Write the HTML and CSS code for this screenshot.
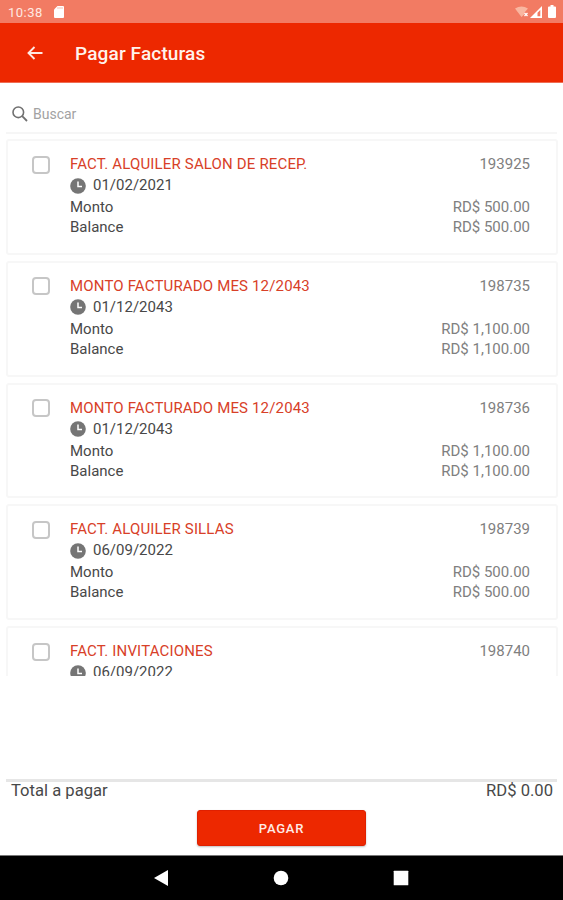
FILE: index.html
```
<!DOCTYPE html>
<html lang="es">
<head>
    <meta charset="UTF-8">
    <meta name="viewport" content="width=device-width, initial-scale=1.0">
    <title>Pagar Facturas</title>
    <link rel="stylesheet" href="styles.css">
</head>
<body>
    <svg class="sprite">
        <symbol id="clock" viewBox="0 0 16 16">
            <circle cx="8" cy="8" r="7.800" fill="#757575"/>
            <path d="M8 3.500V8.500H12" fill="none" stroke="#fff" stroke-width="1.500"/>
        </symbol>
    </svg>

    <div class="status-bar">
        <span class="time">10:38</span>
        <svg class="sd-card" viewBox="0 0 10 12"><path d="M3.500 0H9a1 1 0 0 1 1 1v10a1 1 0 0 1-1 1H1a1 1 0 0 1-1-1V3.500z" fill="#fff"/><path d="M4 1v2M6 1v2M8 1v2" stroke="#f6a594" stroke-width=".7"/></svg>
        <div class="status-icons">
            <svg class="wifi" viewBox="0 0 14 12"><path d="M0 2.500Q6.500-1.500 13 2.500L9.500 6.500V8L6.500 11z" fill="#f9b6a0"/><path d="M9.500 7l3 3M12.500 7l-3 3" stroke="#fff" stroke-width="1.300"/></svg>
            <svg class="signal" viewBox="0 0 12 12"><path d="M0 12L12 0v12z" fill="#fff"/><path d="M7.500 6.800L10.300 4v6.200H7.500z" fill="#f27b63"/></svg>
            <svg class="battery" viewBox="0 0 8 13"><path d="M2.500 0h3v1.500H7a1 1 0 0 1 1 1V12a1 1 0 0 1-1 1H1a1 1 0 0 1-1-1V2.500a1 1 0 0 1 1-1h1.500z" fill="#fff"/></svg>
        </div>
    </div>

    <header class="toolbar">
        <svg class="back" viewBox="0 0 16 14"><path d="M15.500 7H1.500M7.500 1L1.500 7l6 6" fill="none" stroke="#ffe9e2" stroke-width="1.900"/></svg>
        <h1>Pagar Facturas</h1>
    </header>

    <div class="search">
        <svg viewBox="0 0 16 16"><circle cx="6.300" cy="6.300" r="5.300" fill="none" stroke="#707070" stroke-width="1.600"/><path d="M10.200 10.200L15 15" stroke="#707070" stroke-width="1.800"/></svg>
        <span>Buscar</span>
    </div>

    <main class="invoices">
        <div class="card">
            <span class="checkbox"></span>
            <div class="details">
                <div class="row"><span class="name">FACT. ALQUILER SALON DE RECEP.</span><span class="number">193925</span></div>
                <div class="date"><svg><use href="#clock"/></svg>01/02/2021</div>
                <div class="row"><span>Monto</span><span class="amount">RD$ 500.00</span></div>
                <div class="row"><span>Balance</span><span class="amount">RD$ 500.00</span></div>
            </div>
        </div>
        <div class="card">
            <span class="checkbox"></span>
            <div class="details">
                <div class="row"><span class="name">MONTO FACTURADO MES 12/2043</span><span class="number">198735</span></div>
                <div class="date"><svg><use href="#clock"/></svg>01/12/2043</div>
                <div class="row"><span>Monto</span><span class="amount">RD$ 1,100.00</span></div>
                <div class="row"><span>Balance</span><span class="amount">RD$ 1,100.00</span></div>
            </div>
        </div>
        <div class="card">
            <span class="checkbox"></span>
            <div class="details">
                <div class="row"><span class="name">MONTO FACTURADO MES 12/2043</span><span class="number">198736</span></div>
                <div class="date"><svg><use href="#clock"/></svg>01/12/2043</div>
                <div class="row"><span>Monto</span><span class="amount">RD$ 1,100.00</span></div>
                <div class="row"><span>Balance</span><span class="amount">RD$ 1,100.00</span></div>
            </div>
        </div>
        <div class="card">
            <span class="checkbox"></span>
            <div class="details">
                <div class="row"><span class="name">FACT. ALQUILER SILLAS</span><span class="number">198739</span></div>
                <div class="date"><svg><use href="#clock"/></svg>06/09/2022</div>
                <div class="row"><span>Monto</span><span class="amount">RD$ 500.00</span></div>
                <div class="row"><span>Balance</span><span class="amount">RD$ 500.00</span></div>
            </div>
        </div>
        <div class="card">
            <span class="checkbox"></span>
            <div class="details">
                <div class="row"><span class="name">FACT. INVITACIONES</span><span class="number">198740</span></div>
                <div class="date"><svg><use href="#clock"/></svg>06/09/2022</div>
            </div>
        </div>
    </main>

    <footer class="summary">
        <div class="total"><span>Total a pagar</span><span>RD$ 0.00</span></div>
        <button class="pay">PAGAR</button>
    </footer>

    <nav class="nav-bar">
        <svg viewBox="0 0 16 16"><path d="M1 8L15 0v16z" fill="#fff"/></svg>
        <svg viewBox="0 0 16 16"><circle cx="8" cy="8" r="7.300" fill="#fff"/></svg>
        <svg viewBox="0 0 16 16"><rect x=".7" y=".7" width="14.600" height="14.600" rx=".5" fill="#fff"/></svg>
    </nav>
</body>
</html>
```

FILE: styles.css
```
* { box-sizing: border-box; }
body { margin: 0; width: 563px; height: 900px; display: flex; flex-direction: column; overflow: hidden; background: #fff; font-family: Roboto, sans-serif; font-size: 15px; color: #484848; }
svg { display: block; flex-shrink: 0; }
.sprite { display: none; }

.status-bar { height: 23px; flex-shrink: 0; display: flex; align-items: center; padding: 1px 7px 0 8px; background: #f27b63; color: #ffe9e2; font-size: 13px; }
.time { width: 46px; letter-spacing: 0.5px; }
.sd-card { width: 10px; height: 12px; }
.status-icons { display: flex; align-items: center; margin-left: auto; }
.wifi { width: 14px; height: 12px; }
.signal { width: 12px; height: 12px; margin-left: 1px; }
.battery { width: 8px; height: 13px; margin-left: 6px; margin-top: -2px; }

.toolbar { height: 60px; flex-shrink: 0; display: flex; align-items: center; padding-left: 27px; background: #ed2800; border-bottom: 1px solid #ef6d54; }
.back { width: 16px; height: 14px; margin-top: 1px; }
h1 { margin: 2px 0 0 32px; color: #fff3ec; font-size: 19px; font-weight: 500; line-height: 24px; letter-spacing: 0.15px; }

.search { height: 51px; flex-shrink: 0; display: flex; align-items: center; margin: 0 6px; padding: 12px 0 0 6px; border-bottom: 2px solid #f6f6f6; color: #a2a2a2; font-size: 14px; }
.search svg { width: 16px; height: 16px; margin-right: 5px; }

.invoices { height: 542px; flex-shrink: 0; display: flex; flex-direction: column; gap: 6px; padding: 5px 5px 0 6px; overflow: hidden; }
.card { height: 115.8px; flex-shrink: 0; display: flex; padding: 13px 26px 0 24px; border: 2px solid #f7f7f7; border-radius: 3px; }
.checkbox { width: 18px; height: 18px; flex-shrink: 0; margin: 1.5px 20px 0 0; border: 2px solid #c6c6c6; border-radius: 4px; }
.details { flex: 1; }
.row { display: flex; justify-content: space-between; height: 20px; line-height: 20px; }
.name { color: #d84028; letter-spacing: 0.16px; }
.number, .amount { color: #808080; }
.date { display: flex; align-items: center; height: 23px; line-height: 20px; padding-bottom: 1px; }
.date svg { width: 16px; height: 16px; margin: 1px 7px 0 0; }

.summary { height: 179px; flex-shrink: 0; display: flex; flex-direction: column; align-items: center; padding: 103px 6px 0; }
.total { width: 100%; display: flex; justify-content: space-between; padding: 0 4px 0 5px; border-top: 3px solid #e6e6e6; font-size: 16.6px; line-height: 18px; }
.pay { width: 169px; height: 36px; margin-top: 10px; padding: 0; border: 1px solid #e02000; border-radius: 3px; background: #ed2800; color: #ffece6; font: 500 13px Roboto, sans-serif; letter-spacing: 0.75px; box-shadow: 0 1px 2px rgba(0, 0, 0, 0.25); }

.nav-bar { flex: 1; display: flex; justify-content: center; align-items: center; gap: 104px; padding: 0 1px 1px 0; background: #000; border-top: 1px solid #777; }
.nav-bar svg { width: 16px; height: 16px; }
```
